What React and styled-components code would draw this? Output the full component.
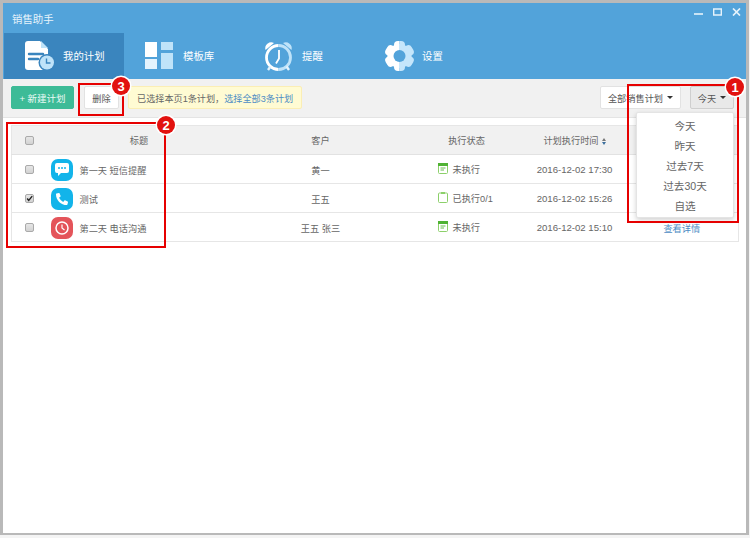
import React from 'react';
import styled, { createGlobalStyle } from 'styled-components';
import { FaPhoneAlt } from 'react-icons/fa';

const GlobalStyle = createGlobalStyle`
  html, body {
    margin: 0;
    padding: 0;
    background: #f4f4f4;
  }
  body {
    font-family: "Liberation Sans", "Noto Sans CJK SC", sans-serif;
    color: #555;
  }
`;

const Page = styled.div`
  position: relative;
  width: 750px;
  height: 538px;
  overflow: hidden;
  box-sizing: border-box;
  padding: 0 1px 3px 0;
`;

const Frame = styled.div`
  display: flex;
  flex-direction: column;
  box-sizing: border-box;
  height: 100%;
  border: 3px solid #b9b9b9;
  border-bottom-width: 2px;
  background: #fff;
`;

const TitleBar = styled.div`
  display: flex;
  align-items: center;
  justify-content: space-between;
  height: 30px;
  padding: 0 5px 0 9px;
  background: #52a3da;
  color: #e6f3fb;
  font-size: 10.4px;
`;

const WindowButtons = styled.div`
  display: flex;
  align-items: center;
  gap: 10px;
  margin-top: -12px;
`;

const Tabs = styled.div`
  display: flex;
  height: 46px;
  padding-left: 1px;
  background: #52a3da;
`;

const Tab = styled.div`
  display: flex;
  align-items: center;
  gap: ${p => p.$gap || 10}px;
  box-sizing: border-box;
  width: 120px;
  padding: 0 0 1px ${p => p.$pad || 21}px;
  background: ${p => (p.$active ? '#3a85be' : 'transparent')};
  color: #fff;
  font-size: 10.4px;
`;

const Toolbar = styled.div`
  display: flex;
  align-items: center;
  height: 39px;
  box-sizing: border-box;
  padding: 0 12px 1px 8px;
  background: #f1f1f1;
  border-bottom: 1px solid #e4e4e4;
`;

const Button = styled.div`
  display: flex;
  align-items: center;
  justify-content: center;
  gap: 3px;
  box-sizing: border-box;
  width: ${p => p.$w}px;
  height: 23px;
  margin-right: ${p => p.$mr || 0}px;
  border: 1px solid ${p => (p.$pressed ? '#cfcfcf' : '#e2e2e2')};
  border-radius: 2px;
  background: ${p => (p.$pressed ? '#e9e9e9' : '#fff')};
  color: #555;
  font-size: 9.2px;
`;

const PrimaryButton = styled(Button)`
  border-color: #3dbb97;
  background: #3dbb97;
  color: #eafaf5;
  font-size: 9.5px;
`;

const Caret = styled.span`
  width: 0;
  height: 0;
  margin-left: 1px;
  border-left: 3px solid transparent;
  border-right: 3px solid transparent;
  border-top: 3.5px solid #333;
`;

const Notice = styled.div`
  display: flex;
  align-items: center;
  box-sizing: border-box;
  height: 23px;
  padding: 0 8px;
  border: 1px solid #fbeeb4;
  border-radius: 2px;
  background: #fffbd3;
  color: #666;
  font-size: 9.15px;
`;

const Link = styled.span`
  color: #4d8cc4;
`;

const Spacer = styled.div`
  flex: 1;
`;

const Content = styled.div`
  flex: 1;
  padding: 7px 7px 0 8px;
`;

const Table = styled.table`
  width: 100%;
  table-layout: fixed;
  border-collapse: collapse;
  border: 1px solid #e6e6e6;
  font-size: 9.2px;
  color: #666;
`;

const Th = styled.th`
  height: 28px;
  padding: 0;
  background: #f1f1f1;
  border-bottom: 1px solid #e2e2e2;
  font-weight: 400;
  text-align: center;
`;

const Td = styled.td`
  height: 27px;
  padding: 1px 0 0;
  border-bottom: 1px solid #e6e6e6;
  text-align: center;
`;

const CheckTd = styled(Td)`
  padding: 0 0 1px;
`;

const TimeText = styled.span`
  font-size: 9.6px;
`;

const CheckBox = styled.span`
  display: inline-flex;
  align-items: center;
  justify-content: center;
  box-sizing: border-box;
  width: 9px;
  height: 9px;
  vertical-align: middle;
  border: 1px solid #aaa;
  border-radius: 2px;
  background: linear-gradient(#e6e6e6, #d2d2d2);
`;

const TitleCell = styled.div`
  display: flex;
  align-items: center;
  gap: 7px;
  padding-left: 4px;
`;

const AppIcon = styled.span`
  display: flex;
  align-items: center;
  justify-content: center;
  width: 22px;
  height: 22px;
  border-radius: 7px;
  background: ${p => p.$bg};
  color: #fff;
  font-size: 12px;
`;

const Status = styled.div`
  display: flex;
  align-items: center;
  gap: 5px;
  margin-top: -2px;
  padding-left: 28px;
`;

const SortIcon = styled.span`
  display: inline-flex;
  flex-direction: column;
  gap: 1px;
  margin-left: 3px;
  vertical-align: middle;
  &::before, &::after {
    content: '';
    width: 0;
    height: 0;
    border-left: 2.5px solid transparent;
    border-right: 2.5px solid transparent;
  }
  &::before {
    border-bottom: 3px solid #777;
  }
  &::after {
    border-top: 3px solid #3c6f9e;
  }
`;

const Dropdown = styled.div`
  position: absolute;
  left: 636px;
  top: 112px;
  box-sizing: border-box;
  width: 98px;
  height: 106px;
  padding: 3px 0;
  border: 1px solid #e4e4e4;
  border-radius: 2px;
  background: #fff;
  box-shadow: 0 2px 5px rgba(0, 0, 0, 0.18);
  font-size: 10.6px;
  color: #666;
`;

const MenuItem = styled.div`
  height: 20px;
  line-height: 20px;
  text-align: center;
`;

const Callout = styled.div`
  position: absolute;
  left: ${p => p.$x}px;
  top: ${p => p.$y}px;
  box-sizing: border-box;
  width: ${p => p.$w}px;
  height: ${p => p.$h}px;
  border: 2px solid #e60000;
  pointer-events: none;
`;

const Badge = styled.div`
  position: absolute;
  left: ${p => p.$x - 9}px;
  top: ${p => p.$y - 9}px;
  display: flex;
  align-items: center;
  justify-content: center;
  box-sizing: border-box;
  width: 18px;
  height: 18px;
  border-radius: 50%;
  background: #e2110f;
  box-shadow: 0 0 0 1.5px #fff;
  color: #fff;
  font-size: 13px;
  font-weight: 700;
`;

function WindowIcons() {
  return (
    <WindowButtons>
      <svg width="9" height="8" viewBox="0 0 9 8"><path d="M0 6h9" stroke="#e6f3fb" strokeWidth="1.6" /></svg>
      <svg width="9" height="8" viewBox="0 0 9 8"><path d="M.7 1h7.600v6H.7z" fill="none" stroke="#e6f3fb" strokeWidth="1.4" /></svg>
      <svg width="9" height="8" viewBox="0 0 9 8"><path d="M1 .5l7 7M8 .5l-7 7" stroke="#e6f3fb" strokeWidth="1.7" /></svg>
    </WindowButtons>
  );
}

function PlanIcon() {
  return (
    <svg width="30" height="29" viewBox="0 0 30 29">
      <path d="M3 0h12l8 8v18a3 3 0 0 1-3 3H3a3 3 0 0 1-3-3V3a3 3 0 0 1 3-3z" fill="#fff" />
      <path d="M16 0l7 7h-7z" fill="#bfe3f9" />
      <path d="M4 13h14M4 18h9" stroke="#3a85be" strokeWidth="2.400" strokeLinecap="round" />
      <circle cx="22" cy="21.500" r="8.500" fill="#3a85be" />
      <circle cx="22" cy="21.500" r="7" fill="#bfe3f9" />
      <path d="M21.500 17.500v4.500h4" fill="none" stroke="#3a85be" strokeWidth="1.400" />
    </svg>
  );
}

function TemplateIcon() {
  return (
    <svg width="28" height="28" viewBox="0 0 28 28">
      <rect x="0" y="0" width="12" height="15" fill="#fff" />
      <rect x="0" y="17" width="12" height="10" fill="#e4f3fd" />
      <rect x="16" y="0" width="12" height="8" fill="#bfe3f9" />
      <rect x="16" y="11" width="12" height="16" fill="#bfe3f9" />
    </svg>
  );
}

function AlarmIcon() {
  return (
    <svg width="29" height="31" viewBox="0 0 29 31">
      <path d="M1.500 10a6 6 0 0 1 8.500-7z" fill="#fff" />
      <path d="M27.500 10a6 6 0 0 0-8.500-7z" fill="#bfe3f9" />
      <path d="M14.500 5.500a12 12 0 0 0 0 24" fill="none" stroke="#fff" strokeWidth="2.800" />
      <path d="M14.500 5.500a12 12 0 0 1 0 24" fill="none" stroke="#bfe3f9" strokeWidth="2.800" />
      <path d="M15 10v8.500l-3 5" fill="none" stroke="#fff" strokeWidth="1.800" />
      <path d="M6.500 26.500L4 30M22.500 26.500L25 30" stroke="#e4f3fd" strokeWidth="2.400" />
    </svg>
  );
}

function GearIcon() {
  const teeth = [0, 60, 120, 180, 240, 300];
  return (
    <svg width="31" height="30" viewBox="0 0 31 30">
      <defs>
        <clipPath id="gear-left"><rect x="0" y="0" width="15.500" height="30" /></clipPath>
        <clipPath id="gear-right"><rect x="15.500" y="0" width="15.500" height="30" /></clipPath>
        <g id="gear-shape">
          <circle cx="15.500" cy="15" r="12" />
          {teeth.map(a => (
            <rect key={a} x="10" y="0" width="11" height="9" rx="4" transform={`rotate(${a} 15.500 15)`} />
          ))}
        </g>
      </defs>
      <use href="#gear-shape" fill="#fff" clipPath="url(#gear-left)" />
      <use href="#gear-shape" fill="#c5e6fb" clipPath="url(#gear-right)" />
      <circle cx="15.500" cy="15" r="6" fill="#52a3da" />
    </svg>
  );
}

function ChatGlyph() {
  return (
    <svg width="14" height="13" viewBox="0 0 14 13">
      <path d="M2 0h10a2 2 0 0 1 2 2v6a2 2 0 0 1-2 2H6l-3 3v-3H2a2 2 0 0 1-2-2V2a2 2 0 0 1 2-2z" fill="#fff" />
      <circle cx="4" cy="5" r="1" fill="#12b4ea" />
      <circle cx="7" cy="5" r="1" fill="#12b4ea" />
      <circle cx="10" cy="5" r="1" fill="#12b4ea" />
    </svg>
  );
}

function ClockGlyph() {
  return (
    <svg width="14" height="14" viewBox="0 0 14 14">
      <circle cx="7" cy="7" r="6" fill="none" stroke="#fff" strokeWidth="1.500" />
      <path d="M7 3.500V7l2.500 2" fill="none" stroke="#fff" strokeWidth="1.200" />
    </svg>
  );
}

function TickGlyph() {
  return (
    <svg width="9" height="9" viewBox="0 0 9 9">
      <path d="M1.500 4.500L3.500 7 8 1.500" fill="none" stroke="#222" strokeWidth="1.800" />
    </svg>
  );
}

function StatusIcon({ done }) {
  return (
    <svg width="10" height="11" viewBox="0 0 10 11">
      <rect x=".5" y="1" width="9" height="9.500" rx="1" fill="#fff" stroke="#8cd06a" />
      {done ? (
        <rect x="3" y="0" width="4" height="2" fill="#8cd06a" />
      ) : (
        <>
          <rect x="0" y="0" width="10" height="3" fill="#4fb233" />
          <path d="M2.500 5h5M2.500 7h3.500" stroke="#6bbd4f" strokeWidth="1" />
        </>
      )}
    </svg>
  );
}

// the first two links sit behind the open menu, only the last one shows
const rows = [
  { title: '第一天 短信提醒', bg: '#12b4ea', icon: <ChatGlyph />, customer: '黄一', status: '未执行', time: '2016-12-02 17:30' },
  { title: '测试', bg: '#12b4ea', icon: <FaPhoneAlt />, customer: '王五', status: '已执行0/1', done: true, checked: true, time: '2016-12-02 15:26' },
  { title: '第二天 电话沟通', bg: '#e4545a', icon: <ClockGlyph />, customer: '王五 张三', status: '未执行', time: '2016-12-02 15:10', link: true },
];

const menuItems = ['今天', '昨天', '过去7天', '过去30天', '自选'];

export default function App() {
  return (
    <Page>
      <GlobalStyle />
      <Frame>
        <TitleBar>
          <span>销售助手</span>
          <WindowIcons />
        </TitleBar>
        <Tabs>
          <Tab $active $gap={8}><PlanIcon />我的计划</Tab>
          <Tab><TemplateIcon />模板库</Tab>
          <Tab $pad={20} $gap={9}><AlarmIcon />提醒</Tab>
          <Tab $pad={20} $gap={7}><GearIcon />设置</Tab>
        </Tabs>
        <Toolbar>
          <PrimaryButton $w={63} $mr={10}>+ 新建计划</PrimaryButton>
          <Button $w={35} $mr={9}>删除</Button>
          <Notice>已选择本页1条计划，<Link>选择全部3条计划</Link></Notice>
          <Spacer />
          <Button $w={81} $mr={9}>全部销售计划 <Caret /></Button>
          <Button $w={44} $pressed>今天 <Caret /></Button>
        </Toolbar>
        <Content>
          <Table>
            <colgroup>
              <col style={{ width: 35 }} />
              <col style={{ width: 185 }} />
              <col style={{ width: 178 }} />
              <col style={{ width: 114 }} />
              <col style={{ width: 102 }} />
              <col />
            </colgroup>
            <thead>
              <tr>
                <Th><CheckBox /></Th>
                <Th>标题</Th>
                <Th>客户</Th>
                <Th>执行状态</Th>
                <Th>计划执行时间<SortIcon /></Th>
                <Th />
              </tr>
            </thead>
            <tbody>
              {rows.map(row => (
                <tr key={row.time}>
                  <CheckTd><CheckBox>{row.checked && <TickGlyph />}</CheckBox></CheckTd>
                  <Td>
                    <TitleCell>
                      <AppIcon $bg={row.bg}>{row.icon}</AppIcon>
                      {row.title}
                    </TitleCell>
                  </Td>
                  <Td>{row.customer}</Td>
                  <Td>
                    <Status><StatusIcon done={row.done} />{row.status}</Status>
                  </Td>
                  <Td><TimeText>{row.time}</TimeText></Td>
                  <Td>{row.link && <Link>查看详情</Link>}</Td>
                </tr>
              ))}
            </tbody>
          </Table>
        </Content>
      </Frame>
      <Dropdown>
        {menuItems.map(item => <MenuItem key={item}>{item}</MenuItem>)}
      </Dropdown>
      <Callout $x={627} $y={84} $w={112} $h={139} />
      <Callout $x={6} $y={122} $w={160} $h={126} />
      <Callout $x={78} $y={83} $w={46} $h={33} />
      <Badge $x={735} $y={87}>1</Badge>
      <Badge $x={166} $y={125}>2</Badge>
      <Badge $x={121} $y={86}>3</Badge>
    </Page>
  );
}
